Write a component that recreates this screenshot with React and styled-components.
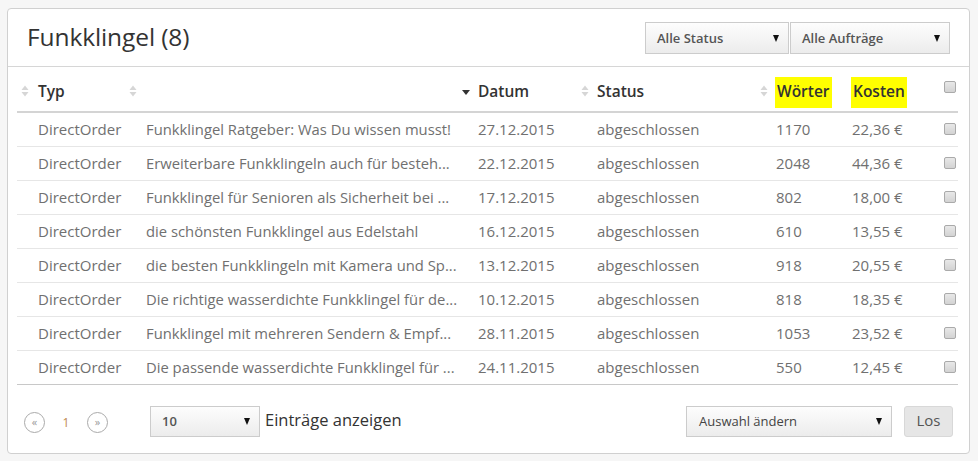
import React from 'react'
import styled, { createGlobalStyle } from 'styled-components'

const rows = [
  ['Funkklingel Ratgeber: Was Du wissen musst!', '27.12.2015', '1170', '22,36 €'],
  ['Erweiterbare Funkklingeln auch für besteh...', '22.12.2015', '2048', '44,36 €'],
  ['Funkklingel für Senioren als Sicherheit bei ...', '17.12.2015', '802', '18,00 €'],
  ['die schönsten Funkklingel aus Edelstahl', '16.12.2015', '610', '13,55 €'],
  ['die besten Funkklingeln mit Kamera und Sp...', '13.12.2015', '918', '20,55 €'],
  ['Die richtige wasserdichte Funkklingel für de...', '10.12.2015', '818', '18,35 €'],
  ['Funkklingel mit mehreren Sendern & Empf...', '28.11.2015', '1053', '23,52 €'],
  ['Die passende wasserdichte Funkklingel für ...', '24.11.2015', '550', '12,45 €'],
]

function SortIcon({ active }) {
  if (active) {
    return (
      <SortSvg width="10" height="14" viewBox="0 0 10 14">
        <path d="M1 6h8l-4 5z" fill="#333" />
      </SortSvg>
    )
  }
  return (
    <SortSvg width="10" height="14" viewBox="0 0 10 14">
      <path d="M1.5 6h7L5 1.5z" fill="#d6d6d6" />
      <path d="M1.5 8h7L5 12.5z" fill="#d6d6d6" />
    </SortSvg>
  )
}

function App() {
  return (
    <>
      <GlobalStyle />
      <Card>
        <CardHead>
          <Title>Funkklingel (8)</Title>
          <Filters>
            <SelectBox $w={144}>
              <span>Alle Status</span>
              <Caret />
            </SelectBox>
            <SelectBox $w={160}>
              <span>Alle Aufträge</span>
              <Caret />
            </SelectBox>
          </Filters>
        </CardHead>

        <TableWrap>
          <Table>
            <colgroup>
              <col style={{ width: 108 }} />
              <col style={{ width: 332 }} />
              <col style={{ width: 119 }} />
              <col style={{ width: 179 }} />
              <col style={{ width: 76 }} />
              <col style={{ width: 97 }} />
              <col style={{ width: 30 }} />
            </colgroup>
            <thead>
              <tr>
                <Th $icon={3}><SortIcon />Typ</Th>
                <Th $icon={3}><SortIcon /></Th>
                <Th $icon={4}><SortIcon active />Datum</Th>
                <Th $icon={4}><SortIcon />Status</Th>
                <Th $icon={4}><SortIcon /><Mark>Wörter</Mark></Th>
                <Th><Mark>Kosten</Mark></Th>
                <CheckTh><Check /></CheckTh>
              </tr>
            </thead>
            <tbody>
              {rows.map(([title, date, words, cost]) => (
                <Row key={date}>
                  <Td>DirectOrder</Td>
                  <Td $size={14.8}>{title}</Td>
                  <Td>{date}</Td>
                  <Td>abgeschlossen</Td>
                  <Td>{words}</Td>
                  <Td>{cost}</Td>
                  <CheckTd><Check /></CheckTd>
                </Row>
              ))}
            </tbody>
          </Table>
        </TableWrap>

        <Footer>
          <Pager>
            <PageCircle>«</PageCircle>
            <PageNum>1</PageNum>
            <PageCircle>»</PageCircle>
          </Pager>
          <SelectBox $w={110} $h={31}>
            <span>10</span>
            <Caret />
          </SelectBox>
          <Entries>Einträge anzeigen</Entries>
          <Spacer />
          <SelectBox $w={206} $h={31}>
            <Light>Auswahl ändern</Light>
            <Caret />
          </SelectBox>
          <GoButton>Los</GoButton>
        </Footer>
      </Card>
    </>
  )
}

export default App

const GlobalStyle = createGlobalStyle`
  html, body {
    margin: 0;
    background: #f6f6f6;
  }
  body {
    padding: 8px 8px 8px 7px;
    font-family: "Open Sans", "Liberation Sans", sans-serif;
  }
`

const Card = styled.div`
  width: 961px;
  height: 444px;
  background: #fff;
  border: 1px solid #d0d0d0;
  border-radius: 4px;
  display: flex;
  flex-direction: column;
`

const CardHead = styled.div`
  height: 57px;
  border-bottom: 1px solid #d6d6d6;
  display: flex;
  align-items: center;
  justify-content: space-between;
  padding: 0 19px 0 19px;
`

const Title = styled.h1`
  margin: 0 0 2px;
  font-size: 24.5px;
  font-weight: 400;
  color: #333;
  letter-spacing: -0.1px;
`

const Filters = styled.div`
  display: flex;
  gap: 1px;
  margin-top: 1px;
`

const SelectBox = styled.div`
  box-sizing: border-box;
  width: ${p => p.$w}px;
  height: ${p => p.$h || 32}px;
  border: 1px solid #ccc;
  background: linear-gradient(#fdfdfd, #ececec);
  display: flex;
  align-items: center;
  justify-content: space-between;
  padding: 0 9px 0 11px;
  font-size: 13px;
  font-weight: 600;
  color: #555;
`

const Light = styled.span`
  font-weight: 400;
  color: #444;
  padding-left: 1px;
`

const Caret = styled.i`
  width: 0;
  height: 0;
  border-left: 3.5px solid transparent;
  border-right: 3.5px solid transparent;
  border-top: 7px solid #111;
`

const TableWrap = styled.div`
  padding: 0 11px 0 9px;
`

const Table = styled.table`
  width: 941px;
  table-layout: fixed;
  border-collapse: collapse;
  font-size: 15px;
`

const Th = styled.th`
  position: relative;
  box-sizing: border-box;
  height: 45px;
  padding: 3px 0 0 21px;
  text-align: left;
  font-weight: 600;
  font-size: 15.5px;
  color: #333;
  border-bottom: 2px solid #d4d4d4;
  vertical-align: middle;

  svg {
    position: absolute;
    left: ${p => p.$icon || 3}px;
    top: 17px;
  }
`

const SortSvg = styled.svg`
  display: block;
`

const Mark = styled.span`
  background: #ffff00;
  padding: 3px 2px 6px 2px;
  margin-left: -1px;
`

const CheckTh = styled.th`
  box-sizing: border-box;
  border-bottom: 2px solid #d4d4d4;
  padding: 0 0 5px 16px;
  text-align: left;
`

const Row = styled.tr`
  height: 34px;
  border-bottom: 1px solid #e6e6e6;
  &:last-child {
    border-bottom: 1px solid #c8c8c8;
  }
`

const Td = styled.td`
  padding: 0 0 1px 21px;
  color: #707070;
  font-weight: 400;
  font-size: ${p => p.$size || 15}px;
  white-space: nowrap;
`

const CheckTd = styled.td`
  padding: 0 0 1px 16px;
`

const Check = styled.span`
  display: block;
  box-sizing: border-box;
  width: 12px;
  height: 12px;
  border: 1px solid #aaa;
  border-radius: 2px;
  background: linear-gradient(#e8e8e8, #d3d3d3);
`

const Footer = styled.div`
  flex: 1;
  display: flex;
  align-items: center;
  padding: 5px 16px 0 16px;
`

const Pager = styled.div`
  display: flex;
  align-items: center;
  gap: 16px;
  margin-right: 42px;
  margin-top: 3px;
`

const PageCircle = styled.span`
  box-sizing: border-box;
  width: 21px;
  height: 21px;
  border: 1px solid #aaa;
  border-radius: 50%;
  display: flex;
  align-items: center;
  justify-content: center;
  font-size: 11px;
  color: #999;
  padding-bottom: 2px;
`

const PageNum = styled.span`
  font-size: 12px;
  color: #c0884d;
  width: 10px;
  text-align: center;
`

const Entries = styled.span`
  margin-left: 5px;
  font-size: 16.5px;
  color: #333;
  padding-bottom: 4px;
`

const Spacer = styled.div`
  flex: 1;
`

const GoButton = styled.button`
  box-sizing: border-box;
  width: 49px;
  height: 31px;
  margin-left: 12px;
  border: 1px solid #d8d8d8;
  border-radius: 3px;
  background: #e6e6e6;
  color: #555;
  font-family: inherit;
  font-size: 15px;
  padding: 0 0 2px;
`
